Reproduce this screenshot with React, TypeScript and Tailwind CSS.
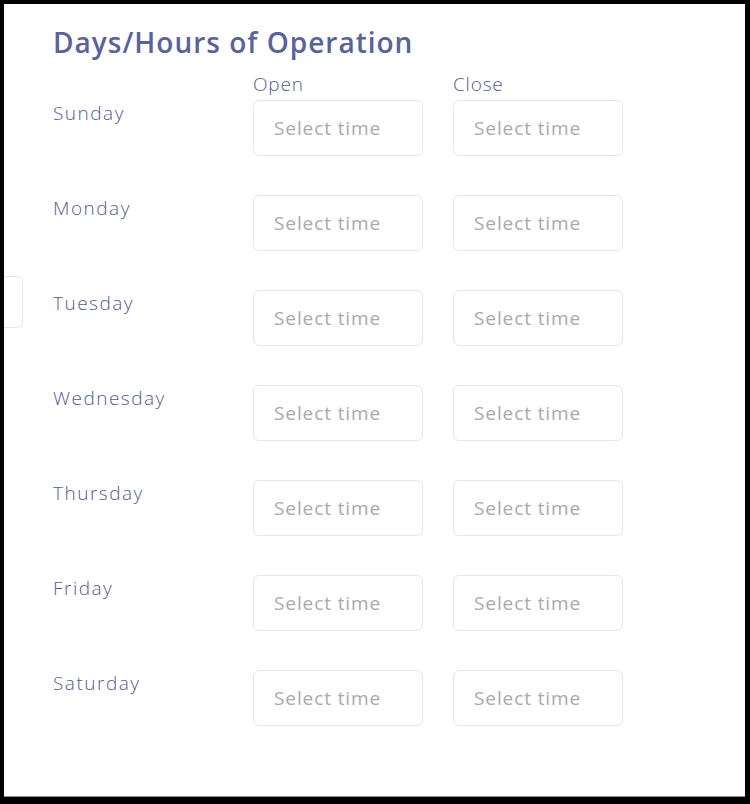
const days = ['Sunday', 'Monday', 'Tuesday', 'Wednesday', 'Thursday', 'Friday', 'Saturday']

function TimeBox() {
  return (
    <div className="flex h-[56px] w-[170px] items-center rounded-[6px] border border-[#e4e5ee] bg-white pl-[20px] text-[19px] tracking-[0.9px] text-[#a9a9ae]">
      Select time
    </div>
  )
}

export default function App() {
  return (
    <div className="h-[804px] w-[750px] bg-black pb-[7px] pl-[4px] pr-[5px] pt-[4px]">
      <div
        className="relative flex h-full w-full flex-col overflow-hidden border-b border-[#8d9096] bg-white text-[#535c93]"
        style={{ fontFamily: '"Open Sans", "Liberation Sans", sans-serif' }}
      >
        {/* clipped field from the panel behind */}
        <div className="absolute left-[-40px] top-[272px] h-[52px] w-[59px] rounded-[6px] border border-[#e4e5ee]" />

        <div className="pl-[49px] pt-[19px]">
          <h2 className="text-[28px] font-semibold leading-[38px] tracking-[1px] text-[#5a6399]">Days/Hours of Operation</h2>

          <div className="mt-[11px] grid grid-cols-[170px_170px_170px] gap-x-[30px]">
            <div />
            <div className="text-[19px] font-light leading-[24px] tracking-[0.8px]">Open</div>
            <div className="text-[19px] font-light leading-[24px] tracking-[0.8px]">Close</div>
          </div>

          <div className="mt-[4px] flex flex-col gap-[39px]">
            {days.map((day) => (
              <div key={day} className="grid grid-cols-[170px_170px_170px] gap-x-[30px]">
                <div className="pt-[1px] text-[19px] font-light leading-[24px] tracking-[1.5px]">{day}</div>
                <TimeBox />
                <TimeBox />
              </div>
            ))}
          </div>
        </div>

        {/* scrollbar thumb */}
        <div className="absolute bottom-[-1px] left-[158px] h-[1px] w-[52px] bg-[#c4c7cc]" />
      </div>
    </div>
  )
}
